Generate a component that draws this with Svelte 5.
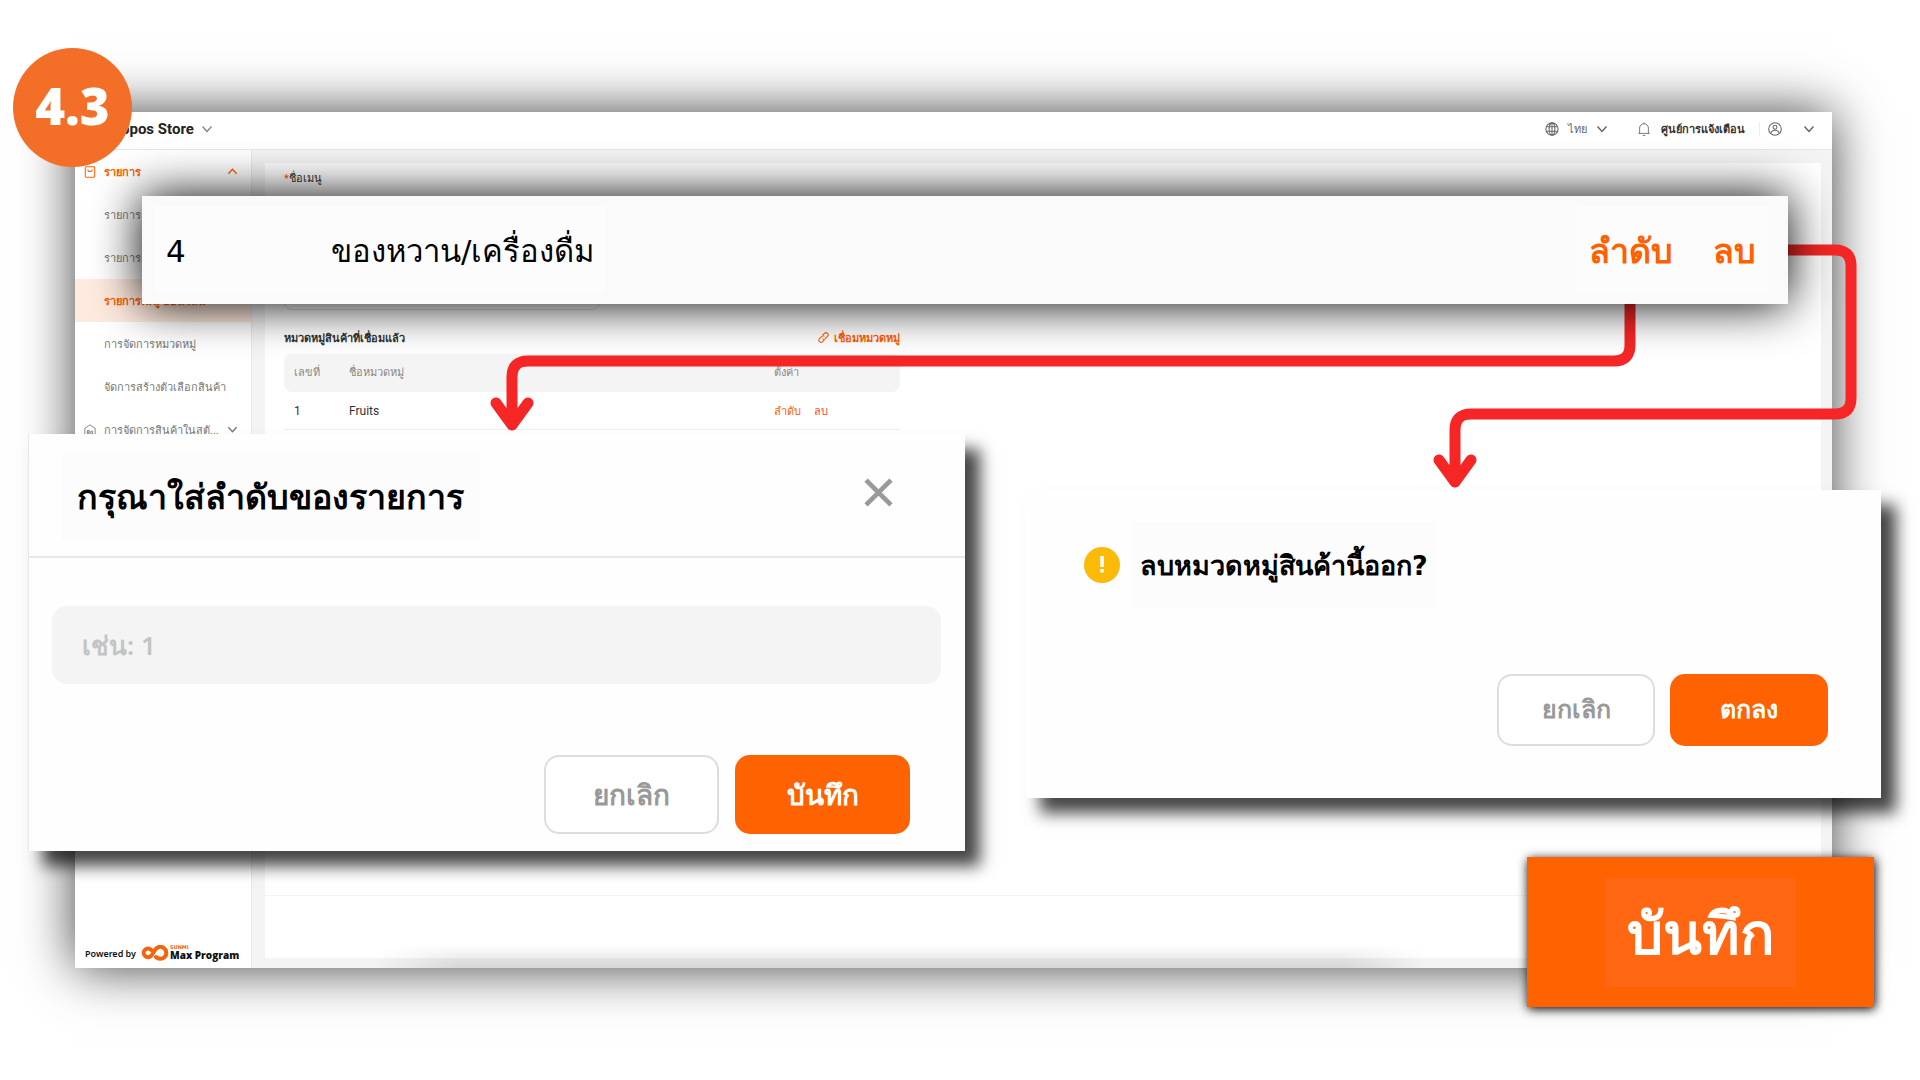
<script>
  const menu = [
    { label: 'รายการ' },
    { label: 'รายการ' },
    { label: 'รายการเมนู ออนไลน์', active: true },
    { label: 'การจัดการหมวดหมู่' },
    { label: 'จัดการสร้างตัวเลือกสินค้า' }
  ];
  const rows = [{ no: 1, name: 'Fruits' }];
  let order = $state('');
</script>

{#snippet chevron(up)}
  <svg class="chevron" class:up viewBox="0 0 12 12" aria-hidden="true">
    <path d="M1.5 3.5 6 8.5l4.500-5" fill="none" stroke="currentColor" stroke-width="1.500" />
  </svg>
{/snippet}

<div class="stage">
  <div class="window">
    <header class="topbar">
      <button class="store">opos Store {@render chevron(false)}</button>
      <button class="lang">
        <svg class="icon" viewBox="0 0 16 16" fill="none" stroke="currentColor" stroke-width="1.200" aria-hidden="true">
          <circle cx="8" cy="8" r="7" /><ellipse cx="8" cy="8" rx="3.300" ry="7" /><path d="M8 1v14M1.600 5.500h12.800M1.600 10.500h12.800" />
        </svg>
        <span>ไทย</span>
        {@render chevron(false)}
      </button>
      <button class="notice">
        <svg class="icon" viewBox="0 0 16 16" fill="none" stroke="currentColor" stroke-width="1" aria-hidden="true">
          <path d="M1.500 13h13M3 13V7a5 5 0 0 1 10 0v6M8 2V.5M6.500 15.300h3" />
        </svg>
        <span>ศูนย์การแจ้งเตือน</span>
      </button>
      <button class="account" aria-label="บัญชี">
        <svg class="icon" viewBox="0 0 16 16" fill="none" stroke="currentColor" stroke-width="1.200" aria-hidden="true">
          <circle cx="8" cy="8" r="7.200" /><circle cx="8" cy="6" r="2.200" /><path d="M3.300 12.500c1.500-4 7.900-4 9.400 0" />
        </svg>
        {@render chevron(false)}
      </button>
    </header>

    <div class="body">
      <nav class="sidebar">
        <a class="group open" href="#items">
          <svg class="icon" viewBox="0 0 14 14" fill="none" stroke="currentColor" stroke-width="1.200" aria-hidden="true">
            <rect x="1.500" y="1" width="11" height="12" rx="1" /><path d="M4.500 4a2.500 2.500 0 0 0 5 0" />
          </svg>
          <span>รายการ</span>
          {@render chevron(true)}
        </a>
        {#each menu as item}
          <a class="entry" class:active={item.active} href="#menu">{item.label}</a>
        {/each}
        <a class="group" href="#stock">
          <svg class="icon" viewBox="0 0 14 14" fill="none" stroke="currentColor" aria-hidden="true">
            <path d="M1 13.500V5l6-4 6 4v8.500zM4 11.500v-4h2v4zM4 9.500h2M8 11.500v-3h2v3z" />
          </svg>
          <span>การจัดการสินค้าในสตั...</span>
          {@render chevron(false)}
        </a>
        <div class="powered">
          <span class="by">Powered by</span>
          <svg class="logo" viewBox="0 0 28 16" fill="none" stroke="#f2640f" stroke-width="4" stroke-linecap="round" aria-hidden="true">
            <path d="M10 4.800A4.300 4.300 0 1 0 10 11c2-2 2.500-4 4-6a6 6 0 1 1 1 7" />
          </svg>
          <span class="brand"><small>SUNMI</small><b>Max Program</b></span>
        </div>
      </nav>

      <main class="content">
        <section class="panel">
          <label class="field">
            <span><i>*</i>ชื่อเมนู</span>
            <input type="text" />
          </label>
          <div class="linked">
            <h2>หมวดหมู่สินค้าที่เชื่อมแล้ว</h2>
            <a class="link" href="#link">
              <svg viewBox="0 0 12 12" fill="none" stroke="currentColor" stroke-width="1.200" aria-hidden="true">
                <path d="M5 3.500 7 1.500a2.300 2.300 0 0 1 3.400 3.200L7.500 7.500A2 2 0 0 1 5 7.300M7 8.500l-2 2A2.300 2.300 0 0 1 1.600 7.300L4.500 4.500A2 2 0 0 1 7 4.700" />
              </svg>
              เชื่อมหมวดหมู่
            </a>
          </div>
          <table>
            <thead>
              <tr><th class="no">เลขที่</th><th>ชื่อหมวดหมู่</th><th class="set">ตั้งค่า</th></tr>
            </thead>
            <tbody>
              {#each rows as row}
                <tr>
                  <td>{row.no}</td>
                  <td>{row.name}</td>
                  <td><a href="#order">ลำดับ</a><a class="remove" href="#remove">ลบ</a></td>
                </tr>
              {/each}
            </tbody>
          </table>
          <footer></footer>
        </section>
      </main>
    </div>
  </div>

  <svg class="arrows" viewBox="0 0 1920 1080" preserveAspectRatio="none" aria-hidden="true">
    <path d="M1630 290V345Q1630 361 1614 361H528Q512 361 512 377V424M496 403L512 425L528 403" />
    <path d="M1770 250H1835Q1851 250 1851 266V398Q1851 414 1835 414H1471Q1455 414 1455 430V480M1439 460L1455 482L1471 460" />
  </svg>

  <section class="callout">
    <div class="patch name"><span class="num">4</span><span>ของหวาน/เครื่องดื่ม</span></div>
    <div class="patch acts"><button>ลำดับ</button><button>ลบ</button></div>
  </section>

  <div class="dialog order" role="dialog" aria-labelledby="order-title">
    <header>
      <h2 class="patch" id="order-title">กรุณาใส่ลำดับของรายการ</h2>
      <button class="close" aria-label="ปิด">
        <svg viewBox="0 0 28 28" aria-hidden="true"><path d="M2 2 26 26M26 2 2 26" stroke="#999" stroke-width="4.500" /></svg>
      </button>
    </header>
    <input type="text" placeholder="เช่น: 1" aria-labelledby="order-title" bind:value={order} />
    <div class="buttons">
      <button class="ghost">ยกเลิก</button>
      <button class="primary">บันทึก</button>
    </div>
  </div>

  <div class="dialog confirm" role="dialog" aria-labelledby="confirm-title">
    <header>
      <svg class="warn" viewBox="0 0 36 36" aria-hidden="true">
        <circle cx="18" cy="18" r="18" fill="#fbb908" />
        <path d="M16.200 9h3.600v11h-3.600zM16.200 22h3.600v3.500h-3.600z" fill="#fff" />
      </svg>
      <h2 class="patch" id="confirm-title">ลบหมวดหมู่สินค้านี้ออก?</h2>
    </header>
    <div class="buttons">
      <button class="ghost">ยกเลิก</button>
      <button class="primary">ตกลง</button>
    </div>
  </div>

  <button class="save"><span>บันทึก</span></button>
  <div class="step">4.3</div>
</div>

<style>
  :global(body) { margin: 0; background: #fff; }
  .stage, .stage :global(*) { box-sizing: border-box; }
  .stage {
    position: relative;
    display: flex;
    min-height: 100vh;
    padding: 112px 88px 112px 75px;
    overflow: hidden;
    background: #fff;
    font-family: Roboto, "Noto Sans", sans-serif;
    font-size: 11px;
    color: #333;
  }
  button { border: 0; padding: 0; background: none; font: inherit; color: inherit; cursor: pointer; }
  a { color: inherit; text-decoration: none; }
  h2 { margin: 0; }
  svg { display: block; flex: none; }
  .chevron { width: 12px; height: 12px; }
  .chevron.up { transform: rotate(180deg); }
  .icon { width: 14px; height: 14px; }

  .window {
    position: relative;
    flex: 1;
    display: flex;
    flex-direction: column;
    background: #fff;
    box-shadow: 0 0 50px rgba(0, 0, 0, 0.75);
  }
  /* soft shade along the lower edge of the window */
  .window::after {
    content: "";
    position: absolute;
    left: 17%;
    right: 23%;
    bottom: 0;
    height: 24px;
    background: linear-gradient(transparent, rgba(0, 0, 0, 0.12));
    mask-image: linear-gradient(90deg, transparent, #000 8%, #000 92%, transparent);
    pointer-events: none;
  }
  .topbar {
    display: flex;
    align-items: center;
    height: 38px;
    padding: 0 17px 3px 46px;
    border-bottom: 1px solid #e6e6e6;
    color: #666;
  }
  .topbar button { display: flex; align-items: center; }
  .topbar .store { gap: 7px; margin-right: auto; font-size: 15px; font-weight: 700; color: #222; }
  .store .chevron { color: #888; }
  .lang { gap: 9px; }
  .notice { gap: 10px; margin-left: 29px; }
  .notice span { font-weight: 700; color: #333; }
  .account { gap: 21px; margin-left: 14px; padding-left: 8px !important; border-left: 1px solid #eee !important; }

  .body { flex: 1; display: flex; }
  .sidebar {
    display: flex;
    flex-direction: column;
    width: 177px;
    border-right: 1px solid #e8e8e8;
    color: #777;
  }
  .group, .entry { display: flex; align-items: center; height: 43px; padding-left: 29px; white-space: nowrap; }
  .group { gap: 8px; padding: 0 13px 0 9px; }
  .group .icon { width: 12px; height: 12px; }
  .group .chevron { width: 11px; height: 11px; margin-left: auto; }
  .group.open { color: #ff6000; font-weight: 700; }
  .entry.active { background: #ffeadf; color: #ff6000; font-weight: 700; }
  .powered { display: flex; align-items: center; gap: 5px; margin-top: auto; padding: 0 8px 7px 10px; color: #111; }
  .by { font: 600 9px "Noto Sans", sans-serif; white-space: nowrap; }
  .logo { width: 28px; height: 16px; }
  .brand { display: flex; flex-direction: column; margin-left: -4px; white-space: nowrap; }
  .brand small { font: 700 5px/5px "DejaVu Sans", sans-serif; color: #f2640f; }
  .brand b { font: 800 10px/11px "Open Sans", sans-serif; }

  .content { flex: 1; display: flex; padding: 13px 11px 10px 13px; background: #f4f4f4; }
  .panel { flex: 1; display: flex; flex-direction: column; padding: 7px 0 0 19px; background: #fff; }
  .field { display: flex; flex-direction: column; justify-content: space-between; width: 316px; height: 140px; font-weight: 500; }
  .field span { line-height: 18px; }
  .field i { font-style: normal; color: #ff6000; }
  .field input { height: 36px; border: 1px solid #ddd; border-radius: 8px; background: #fff; }
  .linked { display: flex; justify-content: space-between; align-items: center; width: 616px; height: 44px; padding-top: 11px; }
  .linked h2 { font-size: 11px; font-weight: 700; }
  .link { display: flex; align-items: center; gap: 5px; color: #ff6000; font-weight: 700; }
  .link svg { width: 11px; height: 11px; }
  table { width: 616px; border-spacing: 0; table-layout: fixed; text-align: left; }
  th { height: 38px; padding: 0 12px 3px; background: #f4f4f4; font-weight: 400; color: #888; }
  td { height: 38px; padding: 0 12px; border-bottom: 1px solid #eee; font-size: 12px; }
  th:first-child { border-radius: 8px 0 0 8px; }
  th:last-child { border-radius: 0 8px 8px 0; }
  th:first-child, td:first-child { padding-left: 10px; }
  th:last-child, td:last-child { padding-left: 10px; }
  .no { width: 53px; }
  .set { width: 136px; }
  td a { margin-right: 13px; font-size: 11px; font-weight: 500; color: #ff6000; }
  td .remove { color: #ff4a3d; }
  footer { height: 63px; margin: auto 0 0 -19px; border-top: 1px solid #f4f4f4; }

  .arrows { position: absolute; inset: 0; width: 100%; height: 100%; pointer-events: none; }
  .arrows path { fill: none; stroke: #f62626; stroke-width: 11; stroke-linecap: round; stroke-linejoin: round; }

  .patch { background: #fcfcfc; }
  .callout {
    position: absolute;
    top: 196px;
    left: 142px;
    right: 132px;
    display: flex;
    justify-content: space-between;
    padding: 10px 20px 11px 12px;
    background: #fafafa;
    box-shadow: 0 0 48px #000;
    font-family: "DejaVu Sans", "Noto Sans", sans-serif;
    font-size: 31px;
    color: #000;
  }
  .callout .patch { display: flex; align-items: center; height: 87px; padding: 3px 12px 0; white-space: nowrap; }
  .num { width: 165px; }
  .acts { gap: 40px; color: #ff6000; font-size: 34px; font-weight: 700; }

  .dialog {
    position: absolute;
    background: #fefefe;
    box-shadow: 15px 15px 15px rgba(0, 0, 0, 0.73);
    font-family: "Noto Sans", sans-serif;
    font-weight: 700;
  }
  .dialog h2 { display: flex; align-items: center; height: 86px; color: #000; white-space: nowrap; font-family: "DejaVu Sans", "Noto Sans", sans-serif; }
  .buttons { display: flex; justify-content: flex-end; gap: 16px; }
  .buttons button { border-radius: 15px; }
  .ghost { border: 2px solid #ddd !important; background: #fff; color: #999 !important; }
  .primary { background: #ff6200; color: #fff !important; }

  .order { top: 434px; left: 28px; width: 937px; padding-bottom: 17px; border-left: 1px solid #e8e8e8; }
  .order header { display: flex; justify-content: space-between; align-items: flex-start; padding: 20px 72px 16px 32px; border-bottom: 2px solid #e8e8e8; }
  .order h2 { padding: 0 16px; font-size: 34px; }
  .close { padding-top: 24px; }
  .close svg { width: 29px; height: 29px; }
  .order input {
    display: block;
    width: calc(100% - 47px);
    height: 78px;
    margin: 48px 24px 0 23px;
    padding: 0 30px;
    border: 0;
    border-radius: 15px;
    background: #f4f4f4;
    font: 600 26px "Noto Sans", sans-serif;
  }
  .order input::placeholder { color: #c4c4c4; }
  .order .buttons { margin: 71px 55px 0 0; }
  .order .buttons button { width: 175px; height: 79px; font-size: 28px; }

  .confirm { top: 490px; left: 1025px; right: 39px; padding: 32px 53px 52px 59px; }
  .confirm header { display: flex; align-items: center; gap: 12px; }
  .confirm h2 { padding: 0 8px; font-size: 27px; }
  .warn { width: 36px; height: 36px; }
  .confirm .buttons { margin-top: 66px; gap: 15px; }
  .confirm .buttons button { width: 158px; height: 72px; padding-bottom: 2px; font-size: 25px; }

  .save {
    position: absolute;
    right: 46px;
    bottom: 73px;
    display: grid;
    place-items: center;
    width: 347px;
    height: 150px;
    background: #ff6200;
    box-shadow: 1px 2px 10px #000;
    font: 700 57px "Noto Sans", sans-serif;
    color: #fff;
  }
  .save span { display: grid; place-items: center; width: 191px; height: 109px; padding-top: 4px; background: #ff6712; }
  .step {
    position: absolute;
    top: 48px;
    left: 13px;
    display: grid;
    place-items: center;
    width: 119px;
    height: 119px;
    padding-bottom: 4px;
    border-radius: 50%;
    background: #f36f28;
    font: 800 51px/1 "Open Sans", sans-serif;
    color: #fff;
  }
</style>
